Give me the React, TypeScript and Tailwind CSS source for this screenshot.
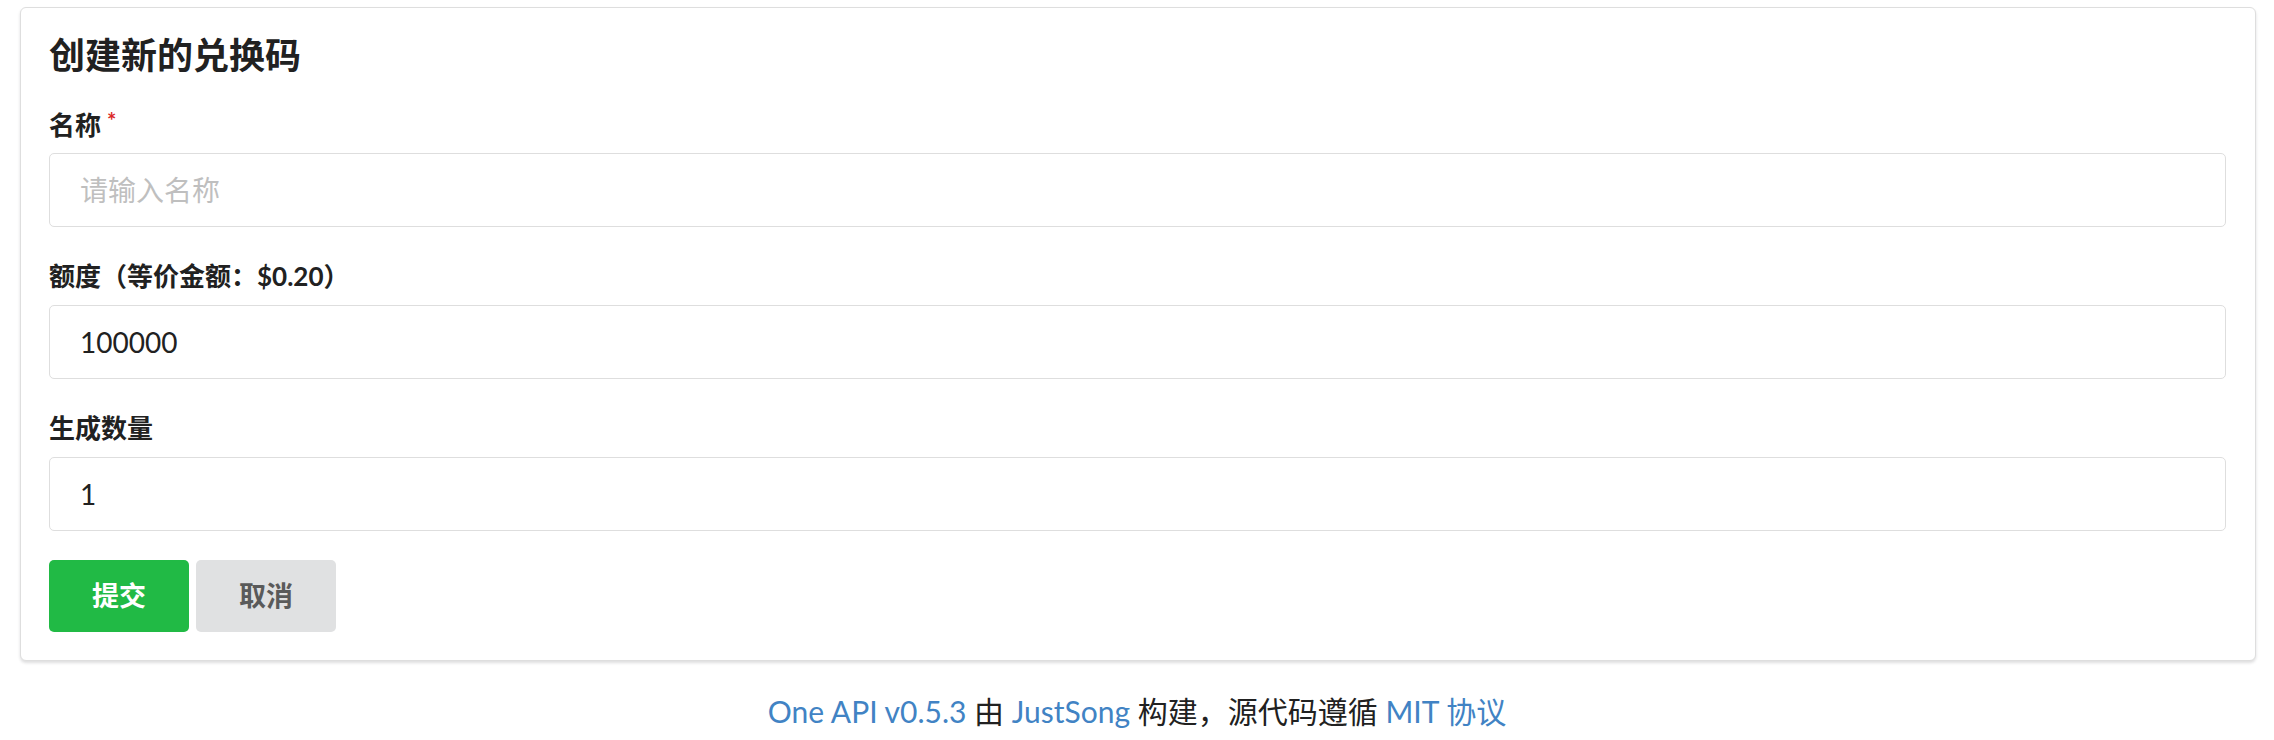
import { useState, type FormEvent } from 'react';

const font = "font-['Lato','Noto_Sans_CJK_SC',sans-serif]";

export default function App() {
  const [name, setName] = useState('');
  const [quota, setQuota] = useState('100000');
  const [count, setCount] = useState('1');

  const handleSubmit = (e: FormEvent) => {
    e.preventDefault();
  };

  const amount = (Number(quota) / 500000).toFixed(2);

  const inputCls =
    "w-full h-[74px] border border-[#dedede] rounded-[5px] px-[30px] text-[28px] text-[#212121] bg-white " +
    "placeholder:text-[#bfbfbf] focus:outline-none focus:border-[#85b7d9]";

  return (
    <div className={`min-h-[740px] bg-white ${font} text-[#212121]`}>
      <div className="ml-[20px] mr-[18px] mt-[7px] bg-white border border-[#dedede] rounded-[6px] shadow-[0_2px_3px_0_rgba(34,36,38,0.15)] pt-[25px] pl-[28px] pr-[29px] pb-[28px]">
        <h2 className="text-[36px] leading-[44px] font-bold">创建新的兑换码</h2>

        <form onSubmit={handleSubmit} className="flex flex-col">
          <label htmlFor="rname" className="mt-[33px] h-[30px] text-[26px] leading-[30px] font-bold flex items-start">
            名称<span className="text-[#db2828] text-[22px] leading-[18px] ml-[6px] mt-[2px]">*</span>
          </label>
          <input id="rname" value={name} onChange={e => setName(e.target.value)}
            placeholder="请输入名称" className={`mt-[13px] ${inputCls}`} />

          <label htmlFor="rquota" className="mt-[34px] h-[30px] text-[26px] leading-[30px] font-bold">
            额度（等价金额：${amount}）
          </label>
          <input id="rquota" value={quota} onChange={e => setQuota(e.target.value)}
            className={`mt-[14px] ${inputCls}`} />

          <label htmlFor="rcount" className="mt-[34px] h-[30px] text-[26px] leading-[30px] font-bold">
            生成数量
          </label>
          <input id="rcount" value={count} onChange={e => setCount(e.target.value)}
            className={`mt-[14px] ${inputCls}`} />

          <div className="mt-[29px] flex gap-[7px]">
            <button type="submit"
              className="w-[140px] h-[72px] rounded-[5px] bg-[#21ba45] hover:bg-[#16ab39] text-white text-[27px] font-bold">
              提交
            </button>
            <button type="button"
              className="w-[140px] h-[72px] rounded-[5px] bg-[#e0e1e2] hover:bg-[#cacbcd] text-[#5a5a5a] text-[27px] font-bold">
              取消
            </button>
          </div>
        </form>
      </div>

      <footer className="mt-[32px] text-center text-[30px] leading-[36px]">
        <a href="#" className="text-[#4183c4]">One API v0.5.3</a> 由{' '}
        <a href="#" className="text-[#4183c4]">JustSong</a> 构建，源代码遵循{' '}
        <a href="#" className="text-[#4183c4]">MIT 协议</a>
      </footer>
    </div>
  );
}
